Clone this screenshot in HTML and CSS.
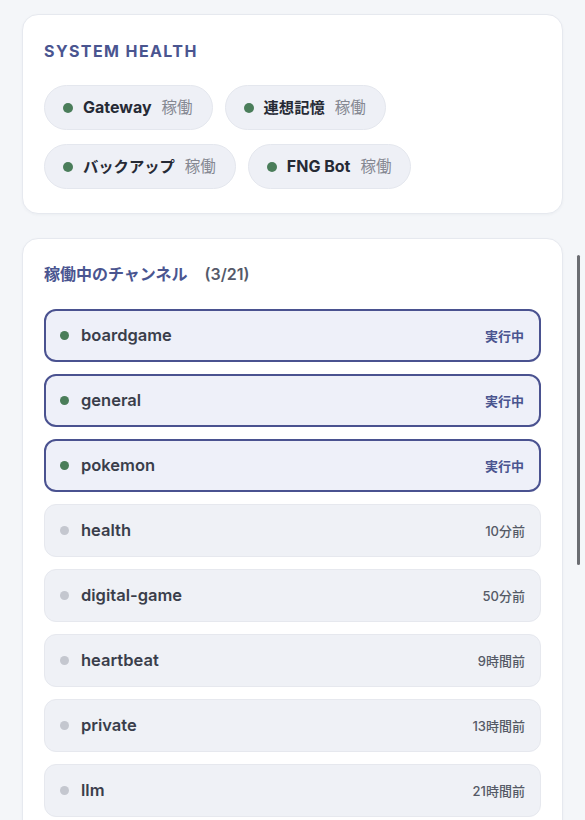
FILE: index.html
```html
<!DOCTYPE html>
<html>

<head>
    <title>System Health</title>
    <link rel="stylesheet" href="styles.css">
</head>

<body>
    <div class="card">
        <div class="title">SYSTEM HEALTH</div>
        <div class="pills">
            <div class="pill"><span class="dot"></span><span class="name">Gateway</span><span class="state">稼働</span></div>
            <div class="pill"><span class="dot"></span><span class="name ja">連想記憶</span><span class="state">稼働</span></div>
            <div class="pill"><span class="dot"></span><span class="name ja">バックアップ</span><span class="state">稼働</span></div>
            <div class="pill"><span class="dot"></span><span class="name">FNG Bot</span><span class="state">稼働</span></div>
        </div>
    </div>

    <div class="card channels">
        <div class="heading">稼働中のチャンネル<span class="count">(3/21)</span></div>
        <div class="list">
            <div class="row active"><span class="dot"></span><span class="channel">boardgame</span><span class="time">実行中</span></div>
            <div class="row active"><span class="dot"></span><span class="channel">general</span><span class="time">実行中</span></div>
            <div class="row active"><span class="dot"></span><span class="channel">pokemon</span><span class="time">実行中</span></div>
            <div class="row"><span class="dot"></span><span class="channel">health</span><span class="time">10分前</span></div>
            <div class="row"><span class="dot"></span><span class="channel">digital-game</span><span class="time">50分前</span></div>
            <div class="row"><span class="dot"></span><span class="channel">heartbeat</span><span class="time">9時間前</span></div>
            <div class="row"><span class="dot"></span><span class="channel">private</span><span class="time">13時間前</span></div>
            <div class="row"><span class="dot"></span><span class="channel">llm</span><span class="time">21時間前</span></div>
        </div>
    </div>

    <div class="scrollbar"></div>
</body>

</html>
```

FILE: styles.css
```css
body {
    font-family: Inter, "Noto Sans CJK JP", sans-serif;
    margin: 0;
    padding: 14px 22px;
    background-color: #f4f6f9;
    color: #2b2f3a;
    height: 820px;
    box-sizing: border-box;
    overflow: hidden;
    position: relative;
}

.card {
    background-color: #ffffff;
    border: 1px solid #e6e9ef;
    border-radius: 16px;
    padding: 26px 21px 24px;
    box-shadow: 0 1px 3px rgba(30, 40, 70, 0.04);
}

.title {
    font-size: 16px;
    line-height: 20px;
    font-weight: 700;
    letter-spacing: 1.4px;
    color: #4a5590;
    margin-bottom: 24px;
}

.pills {
    display: flex;
    flex-wrap: wrap;
    gap: 14px 12px;
}

.pill {
    display: flex;
    align-items: center;
    padding: 11px 19px 11px 18px;
    line-height: 21px;
    background-color: #eef0f6;
    border: 1px solid #e4e7ee;
    border-radius: 999px;
}

.dot {
    width: 10px;
    height: 10px;
    border-radius: 50%;
    background-color: #4a7d5a;
    flex-shrink: 0;
}

.pill .name {
    font-size: 16px;
    font-weight: 700;
    margin-left: 10px;
    color: #262a35;
}

.pill .name.ja {
    font-size: 15.3px;
}

.pill .state {
    font-size: 15.5px;
    margin-left: 10px;
    color: #858892;
}

.channels {
    margin-top: 24px;
    padding-top: 25px;
    padding-bottom: 40px;
}

.heading {
    font-size: 16px;
    line-height: 20px;
    font-weight: 600;
    color: #4a5590;
    margin-bottom: 25px;
}

.count {
    margin-left: 17px;
    color: #555a6a;
}

.list {
    display: flex;
    flex-direction: column;
    gap: 12px;
}

.row {
    display: flex;
    align-items: center;
    height: 53px;
    box-sizing: border-box;
    padding: 0 15px 0 15px;
    background-color: #eff1f6;
    border: 1px solid #e6e8ee;
    border-radius: 12px;
}

.row .dot {
    width: 9px;
    height: 9px;
    background-color: #c4c7cf;
}

.row.active {
    border: 2px solid #4a5290;
    background-color: #eef0f9;
    padding-left: 14px;
    padding-right: 15px;
}

.row.active .dot {
    background-color: #4a7d5a;
}

.channel {
    margin-left: 12px;
    font-size: 16.5px;
    font-weight: 600;
    color: #3a3e4b;
    margin-top: -2px;
}

.time {
    margin-left: auto;
    font-size: 13px;
    font-weight: 500;
    color: #555a66;
}

.row.active .time {
    color: #4a5590;
    font-weight: 600;
}

/* overlay scrollbar of the channel list */
.scrollbar {
    position: absolute;
    right: 5px;
    top: 255px;
    width: 3px;
    height: 310px;
    border-radius: 2px;
    background-color: #6b6d72;
}
```
